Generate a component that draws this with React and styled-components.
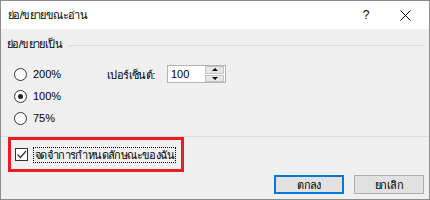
import React from "react";
import styled, { createGlobalStyle } from "styled-components";

const Global = createGlobalStyle`
  html, body { margin: 0; padding: 0; background: #ffffff; }
  body { font-family: Tahoma, "Liberation Sans", "Noto Sans", "DejaVu Sans", sans-serif; font-size: 11px; color: #000; }
`;

const Window = styled.div`
  width: 430px;
  height: 200px;
  box-sizing: border-box;
  border: 1px solid #8c8c8c;
  display: flex;
  flex-direction: column;
  background: #f0f0f0;
`;

const TitleBar = styled.div`
  height: 28px;
  background: #ffffff;
  display: flex;
  align-items: center;
  padding-left: 7px;
  flex-shrink: 0;
`;

const Thai = styled.span`
  letter-spacing: -0.6px;
  white-space: nowrap;
`;

const Title = styled.div`
  flex: 1;
  font-size: 11px;
  white-space: nowrap;
`;

const TitleButton = styled.div`
  width: ${(p) => p.$w}px;
  height: 28px;
  display: flex;
  align-items: center;
  justify-content: center;
  font-size: 12px;
`;

const Body = styled.div`
  flex: 1;
  display: flex;
  flex-direction: column;
  padding: 0 5px 0 6px;
`;

const GroupHeader = styled.div`
  display: flex;
  align-items: center;
  height: 16px;
  margin-top: 7px;
  gap: 6px;
  white-space: nowrap;
`;

const GroupLine = styled.div`
  flex: 1;
  height: 1px;
  background: #dcdcdc;
  margin-top: 3px;
`;

const Content = styled.div`
  display: flex;
  margin-top: 11px;
  height: 73px;
`;

const RadioColumn = styled.div`
  display: flex;
  flex-direction: column;
  padding-left: 7px;
  width: 93px;
`;

const RadioRow = styled.div`
  display: flex;
  align-items: center;
  height: 22px;
  gap: 6px;
`;

const RadioCircle = styled.div`
  width: 11px;
  height: 11px;
  border-radius: 50%;
  border: 1px solid #333;
  background: #fff;
  display: flex;
  align-items: center;
  justify-content: center;
  &::after {
    content: "";
    display: ${(p) => (p.$checked ? "block" : "none")};
    width: 5px;
    height: 5px;
    border-radius: 50%;
    background: #222;
  }
`;

const PercentArea = styled.div`
  display: flex;
  align-items: flex-start;
  padding-top: 2px;
`;

const PercentLabel = styled.div`
  width: 60px;
  padding-top: 1px;
  white-space: nowrap;
`;

const Spin = styled.div`
  display: flex;
  width: 59px;
  height: 18px;
  box-sizing: border-box;
  border: 1px solid #b4b4b4;
  background: #fff;
`;

const SpinValue = styled.div`
  flex: 1;
  padding-left: 3px;
  display: flex;
  align-items: center;
`;

const SpinButtons = styled.div`
  width: 20px;
  display: flex;
  flex-direction: column;
  gap: 1px;
  padding: 0 1px 0 0;
  box-sizing: border-box;
`;

const SpinButton = styled.div`
  flex: 1;
  background: #e6e6e6;
  border: 1px solid #c4c4c4;
  display: flex;
  align-items: center;
  justify-content: center;
  &::after {
    content: "";
    width: 0;
    height: 0;
    border-left: 3px solid transparent;
    border-right: 3px solid transparent;
    ${(p) => (p.$up ? "border-bottom: 3px solid #000;" : "border-top: 3px solid #000;")}
  }
`;

const Separator = styled.div`
  height: 1px;
  background: #dcdcdc;
  margin-left: -6px;
  margin-right: -5px;
`;

const Highlight = styled.div`
  width: 176px;
  height: 35px;
  box-sizing: border-box;
  border: 3px solid #ec1c24;
  margin-left: 1px;
  display: flex;
  align-items: center;
  padding-left: 4px;
  gap: 5px;
`;

const CheckBox = styled.div`
  width: 11px;
  height: 11px;
  flex-shrink: 0;
  border: 1px solid #333;
  background: #fff;
  display: flex;
  align-items: center;
  justify-content: center;
`;

const FocusLabel = styled.div`
  border: 1px dotted #000;
  padding: 0 1px;
  height: 14px;
  line-height: 14px;
  margin-top: 1px;
  white-space: nowrap;
`;

const ButtonRow = styled.div`
  display: flex;
  justify-content: flex-end;
  gap: 10px;
  margin-top: 3px;
`;

const Button = styled.div`
  width: 70px;
  height: 19px;
  box-sizing: border-box;
  background: #e1e1e1;
  border: ${(p) => (p.$primary ? "2px solid #0078d7" : "1px solid #adadad")};
  display: flex;
  align-items: center;
  justify-content: center;
`;

export default function App() {
  return (
    <>
      <Global />
      <Window>
        <TitleBar>
          <Title><Thai>ย่อ/ขยายขณะอ่าน</Thai></Title>
          <TitleButton $w={30}>?</TitleButton>
          <TitleButton $w={48}>
            <svg width="11" height="11" viewBox="0 0 11 11">
              <path d="M0.5 0.5 L10.5 10.5 M10.5 0.5 L0.5 10.5" stroke="#000" strokeWidth="1" />
            </svg>
          </TitleButton>
        </TitleBar>
        <Body>
          <GroupHeader>
            <Thai>ย่อ/ขยายเป็น</Thai>
            <GroupLine />
          </GroupHeader>
          <Content>
            <RadioColumn>
              <RadioRow><RadioCircle /><span>200%</span></RadioRow>
              <RadioRow><RadioCircle $checked /><span>100%</span></RadioRow>
              <RadioRow><RadioCircle /><span>75%</span></RadioRow>
            </RadioColumn>
            <PercentArea>
              <PercentLabel><Thai>เปอร์เซ็นต์:</Thai></PercentLabel>
              <Spin>
                <SpinValue>100</SpinValue>
                <SpinButtons>
                  <SpinButton $up />
                  <SpinButton />
                </SpinButtons>
              </Spin>
            </PercentArea>
          </Content>
          <Separator />
          <Highlight>
            <CheckBox>
              <svg width="11" height="11" viewBox="0 0 11 11">
                <path d="M1.5 5.5 L4.5 8.5 L10 2" stroke="#333" strokeWidth="1.2" fill="none" />
              </svg>
            </CheckBox>
            <FocusLabel><Thai>จดจำการกำหนดลักษณะของฉัน</Thai></FocusLabel>
          </Highlight>
          <ButtonRow>
            <Button $primary><Thai>ตกลง</Thai></Button>
            <Button><Thai>ยกเลิก</Thai></Button>
          </ButtonRow>
        </Body>
      </Window>
    </>
  );
}
